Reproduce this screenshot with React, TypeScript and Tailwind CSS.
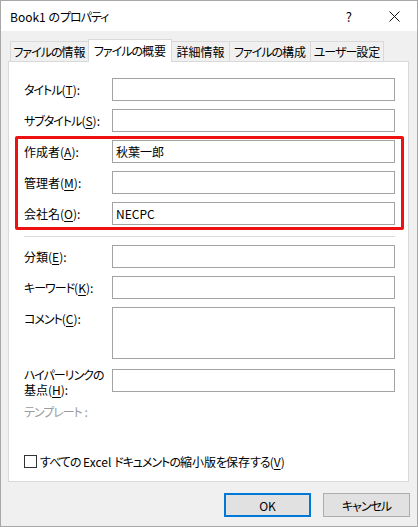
import React from "react";

const FONT =
  "font-['Noto_Sans_CJK_JP','Noto_Sans',sans-serif] [font-feature-settings:'palt'] text-[12px] leading-[15px] text-black whitespace-nowrap";

// Yu Gothic UI kana are narrower than Noto's; tighten kana runs only
function J({ children }: { children: string }) {
  const parts = children.split(/([\u30a0-\u30ff\u3040-\u309f]+)/);
  return (
    <>
      {parts.map((p, i) =>
        i % 2 === 1 ? (
          <span key={i} className="tracking-[-1px]">
            {p}
          </span>
        ) : (
          <React.Fragment key={i}>{p}</React.Fragment>
        ),
      )}
    </>
  );
}

const TABS = [
  { label: "ファイルの情報", w: "w-[79px]" },
  { label: "ファイルの概要", w: "w-[84px]", active: true },
  { label: "詳細情報", w: "w-[59px]" },
  { label: "ファイルの構成", w: "w-[82px]" },
  { label: "ユーザー設定", w: "w-[74px]" },
];

function Label({ text, mn }: { text: string; mn: string }) {
  return (
    <span>
      <J>{text}</J>(<span className="underline underline-offset-2">{mn}</span>):
    </span>
  );
}

function Field({
  label,
  value,
  className = "",
  tall = false,
}: {
  label: React.ReactNode;
  value?: string;
  className?: string;
  tall?: boolean;
}) {
  return (
    <div className={`flex items-start ${className}`}>
      <div className="w-[88px] h-[23px] shrink-0 flex items-center">{label}</div>
      <div
        className={`w-[283px] ${tall ? "h-[52px] items-start pt-[3px]" : "h-[23px] items-center"} border border-[#a3a3a3] bg-white px-[3px] flex`}
      >
        {value}
      </div>
    </div>
  );
}

export default function App() {
  return (
    <div className={`${FONT} w-[418px] h-[527px] border border-[#a8a8a8] bg-[#f0f0f0] flex flex-col`}>
      {/* Title bar */}
      <div className="h-[30px] bg-white flex items-center pl-[9px] pr-[17px] shrink-0">
        <span className="flex-1">
          Book1 の<J>プロパティ</J>
        </span>
        <span className="text-[13px] mr-[37px]">?</span>
        <svg width="11" height="11" viewBox="0 0 11 11" className="block">
          <path d="M0.5 0.5 L10.5 10.5 M10.5 0.5 L0.5 10.5" stroke="#111" strokeWidth="1" />
        </svg>
      </div>

      {/* Tabs */}
      <div className="flex items-end h-[30px] pl-[9px] shrink-0">
        {TABS.map((t, i) => (
          <div
            key={t.label}
            className={`${t.w} ${i > 0 ? "-ml-px" : ""} border-x border-t border-[#d9d9d9] flex items-center justify-center ${
              t.active
                ? "relative z-10 h-[23px] -mb-px bg-white pb-[2px]"
                : "h-[20px] bg-[#f0f0f0]"
            }`}
          >
            <J>{t.label}</J>
          </div>
        ))}
      </div>

      {/* Panel */}
      <div className="relative ml-[7px] w-[401px] h-[421px] border border-[#d9d9d9] bg-white pl-[15px] flex flex-col shrink-0">
        <Field className="mt-[16px]" label={<Label text="タイトル" mn="T" />} />
        <Field className="mt-[8px]" label={<Label text="サブタイトル" mn="S" />} />
        <Field className="mt-[8px]" label={<Label text="作成者" mn="A" />} value="秋葉一郎" />
        <Field className="mt-[8px]" label={<Label text="管理者" mn="M" />} />
        <Field className="mt-[8px]" label={<Label text="会社名" mn="O" />} value="NECPC" />

        <div className="mt-[11px] h-px w-[371px] bg-[#dcdcdc]" />

        <Field className="mt-[8px]" label={<Label text="分類" mn="E" />} />
        <Field className="mt-[8px]" label={<Label text="キーワード" mn="K" />} />
        <Field className="mt-[8px]" tall label={<Label text="コメント" mn="C" />} />
        <Field
          className="mt-[10px]"
          label={
            <div className="flex flex-col pt-[2px]">
              <span>
                <J>ハイパーリンクの</J>
              </span>
              <span>
                基点(<span className="underline underline-offset-2">H</span>):
              </span>
            </div>
          }
        />

        <div className="mt-[12px] text-[#9b9b9b]">
          <J>テンプレート</J> :
        </div>

        <div className="mt-[35px] flex items-center">
          <span className="w-[13px] h-[13px] border border-[#333] bg-white mr-[3px]" />
          <span>
            <J>すべての</J> Excel <J>ドキュメントの</J>縮小版<J>を</J>保存<J>する</J>(
            <span className="underline underline-offset-2">V</span>)
          </span>
        </div>

        {/* highlight annotation */}
        <div className="absolute left-[6px] top-[74px] w-[389px] h-[94px] border-[3px] border-[#ee1111] rounded-[2px] pointer-events-none" />
      </div>

      {/* Buttons */}
      <div className="flex justify-end gap-[12px] mt-[11px] pr-[7px]">
        <button className="w-[87px] h-[24px] bg-[#e1e1e1] border-2 border-[#0078d7] flex items-center justify-center">
          OK
        </button>
        <button className="w-[87px] h-[24px] bg-[#e1e1e1] border border-[#adadad] flex items-center justify-center">
          <J>キャンセル</J>
        </button>
      </div>
    </div>
  );
}
